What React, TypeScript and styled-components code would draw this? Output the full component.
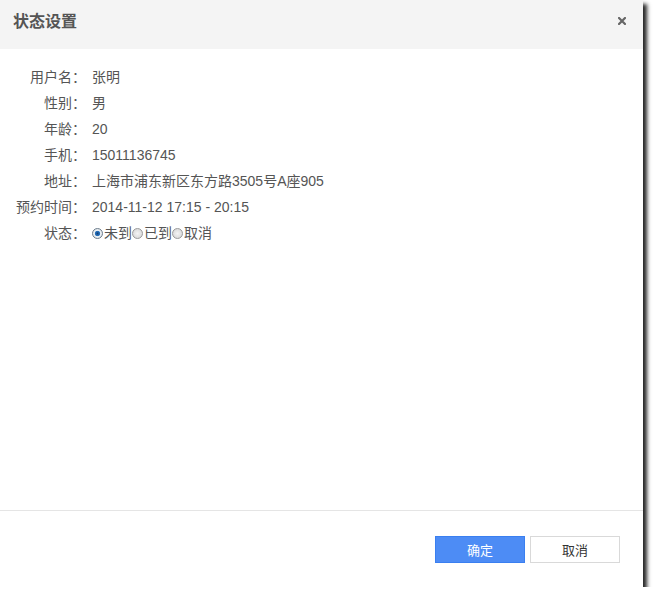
import styled, { createGlobalStyle } from "styled-components";

const Global = createGlobalStyle`
  html, body {
    margin: 0;
    padding: 0;
    background: #fff;
  }
  body {
    font-family: "Liberation Sans", "Noto Sans CJK SC", sans-serif;
  }
`;

const Dialog = styled.div`
  width: 643px;
  height: 587px;
  background: #fff;
  display: flex;
  flex-direction: column;
  box-shadow: 4px 4px 4px rgba(0, 0, 0, 0.85);
`;

const Header = styled.div`
  height: 49px;
  flex-shrink: 0;
  background: #f4f4f4;
  display: flex;
  align-items: center;
  justify-content: space-between;
  padding: 0 17px 0 13px;
  box-sizing: border-box;
`;

const Title = styled.h3`
  margin: 0;
  margin-top: -10px;
  font-size: 16px;
  font-weight: bold;
  color: #555;
`;

const Close = styled.button`
  border: 0;
  background: none;
  padding: 0;
  margin-top: -8px;
  width: 8px;
  height: 8px;
  display: flex;
  cursor: pointer;
`;

const Body = styled.div`
  flex: 1;
  padding-top: 15px;
  display: grid;
  grid-template-columns: 86px 1fr;
  grid-auto-rows: 26px;
  column-gap: 6px;
  align-content: start;
  font-size: 14px;
  color: #555;
`;

const Label = styled.div`
  text-align: right;
  line-height: 26px;
  white-space: nowrap;
`;

const Value = styled.div`
  line-height: 26px;
  display: flex;
  align-items: center;
`;

const RadioItem = styled.label`
  display: inline-flex;
  align-items: center;
  cursor: pointer;
`;

const Radio = styled.input.attrs({ type: "radio" })`
  appearance: none;
  margin: 0 1px 0 0;
  width: 11px;
  height: 11px;
  border-radius: 50%;
  border: 1px solid #9a9a9a;
  box-sizing: border-box;
  background: radial-gradient(circle, #f4f4f4 0%, #e0e0e0 60%, #c8c8c8 100%);
  &:checked {
    border-color: #6d7d8c;
    background: radial-gradient(circle, #123f73 0%, #2a78c6 38%, #eef2f5 48%, #cfd5db 100%);
  }
`;

const Footer = styled.div`
  height: 77px;
  flex-shrink: 0;
  border-top: 1px solid #e5e5e5;
  box-sizing: border-box;
  display: flex;
  justify-content: flex-end;
  align-items: flex-start;
  gap: 5px;
  padding: 25px 23px 0 0;
`;

const Button = styled.button<{ $primary?: boolean }>`
  width: 90px;
  height: 27px;
  box-sizing: border-box;
  font-family: "Liberation Sans", "Noto Sans CJK SC", sans-serif;
  font-size: 13px;
  cursor: pointer;
  border: 1px solid ${p => (p.$primary ? "#3a7ff0" : "#d9d9d9")};
  background: ${p => (p.$primary ? "#4d8cf5" : "#fff")};
  color: ${p => (p.$primary ? "#fff" : "#333")};
  padding: 0;
`;

const rows: [string, string][] = [
  ["用户名：", "张明"],
  ["性别：", "男"],
  ["年龄：", "20"],
  ["手机：", "15011136745"],
  ["地址：", "上海市浦东新区东方路3505号A座905"],
  ["预约时间：", "2014-11-12 17:15 - 20:15"],
];

const statuses = ["未到", "已到", "取消"];

export default function App() {
  return (
    <>
      <Global />
      <Dialog>
        <Header>
          <Title>状态设置</Title>
          <Close aria-label="关闭">
            <svg width="8" height="8" viewBox="0 0 8 8">
              <path d="M1 1L7 7M7 1L1 7" stroke="#666" strokeWidth="2.2" strokeLinecap="square" />
            </svg>
          </Close>
        </Header>
        <Body>
          {rows.map(([k, v]) => [
            <Label key={k}>{k}</Label>,
            <Value key={k + "v"}>{v}</Value>,
          ])}
          <Label>状态：</Label>
          <Value>
            {statuses.map((s, i) => (
              <RadioItem key={s}>
                <Radio name="status" defaultChecked={i === 0} />
                {s}
              </RadioItem>
            ))}
          </Value>
        </Body>
        <Footer>
          <Button $primary>确定</Button>
          <Button>取消</Button>
        </Footer>
      </Dialog>
    </>
  );
}
